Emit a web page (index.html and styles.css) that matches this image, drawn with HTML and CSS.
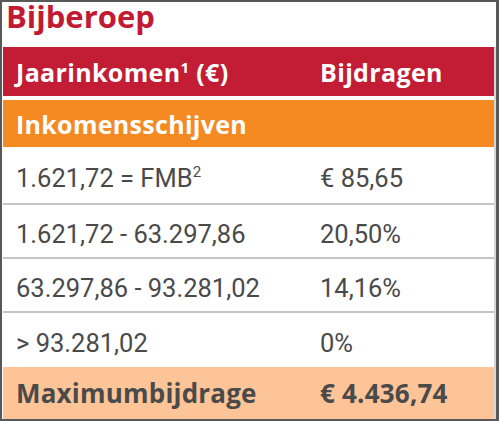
FILE: index.html
```html
<!DOCTYPE html>
<html lang="nl">
<head>
<meta charset="utf-8">
<title>Bijberoep</title>
<link rel="stylesheet" href="styles.css">
</head>
<body>
<div class="frame">
  <h1 class="title">Bijberoep</h1>
  <div class="table">
    <div class="row head">
      <div class="c1">Jaarinkomen<sup class="sup-h">1</sup> (€)</div>
      <div class="c2">Bijdragen</div>
    </div>
    <div class="row band">
      <div class="c1">Inkomensschijven</div>
    </div>
    <div class="row data first">
      <div class="c1">1.621,72 = FMB<sup class="sup-d">2</sup></div>
      <div class="c2">€ 85,65</div>
    </div>
    <div class="row data">
      <div class="c1">1.621,72 - 63.297,86</div>
      <div class="c2">20,50%</div>
    </div>
    <div class="row data">
      <div class="c1">63.297,86 - 93.281,02</div>
      <div class="c2">14,16%</div>
    </div>
    <div class="row data last">
      <div class="c1">&gt; 93.281,02</div>
      <div class="c2">0%</div>
    </div>
    <div class="row total">
      <div class="c1">Maximumbijdrage</div>
      <div class="c2">€ 4.436,74</div>
    </div>
  </div>
</div>
</body>
</html>
```

FILE: styles.css
```css
html, body {
  margin: 0;
  padding: 0;
  background: #ffffff;
}

.frame {
  width: 499px;
  height: 421px;
  box-sizing: border-box;
  border: 2px solid #585858;
  border-right-width: 3px;
  background: #ffffff;
  display: flex;
  flex-direction: column;
}

.title {
  margin: 0;
  height: 45px;
  padding-left: 4px;
  font-family: "Open Sans", "Liberation Sans", sans-serif;
  font-weight: 700;
  font-size: 31px;
  line-height: 29px;
  color: #c21a32;
  flex: none;
}

.table {
  display: flex;
  flex-direction: column;
  margin-left: 1px;
  border-right: 2px solid #d6d6d6;
  flex: 1;
}

.row {
  display: flex;
  align-items: center;
  box-sizing: border-box;
  flex: none;
}

.c1 {
  width: 317px;
  padding-left: 13px;
  box-sizing: border-box;
  white-space: nowrap;
}

.c2 {
  flex: 1;
  white-space: nowrap;
}

.head {
  background: #c21d34;
  color: #ffffff;
  font-family: "Open Sans", "Liberation Sans", sans-serif;
  font-weight: 700;
  font-size: 25px;
  letter-spacing: 0.35px;
  border-bottom: 4px solid #ffffff;
  height: 53px;
}

.sup-h {
  font-size: 15px;
  vertical-align: 9px;
  line-height: 0;
}

.band {
  height: 47px;
  background: #f48a21;
  color: #ffffff;
  font-family: "Open Sans", "Liberation Sans", sans-serif;
  font-weight: 700;
  font-size: 25px;
  letter-spacing: 0.3px;
}

.data {
  height: 54px;
  padding-top: 5px;
  color: #4a4a4a;
  font-family: "Roboto", "Liberation Sans", sans-serif;
  font-weight: 400;
  font-size: 25.5px;
  border-bottom: 2px solid #c4c4c4;
}

.data.first {
  height: 58px;
  padding-top: 6px;
}

.data.last {
  border-bottom: none;
}

.sup-d {
  font-size: 15px;
  vertical-align: 10px;
  line-height: 0;
}

.total {
  flex: 1;
  background: #fdc497;
  color: #4a4a4a;
  font-family: "Open Sans", "Liberation Sans", sans-serif;
  font-weight: 700;
  font-size: 26px;
  letter-spacing: 0.2px;
}
```
